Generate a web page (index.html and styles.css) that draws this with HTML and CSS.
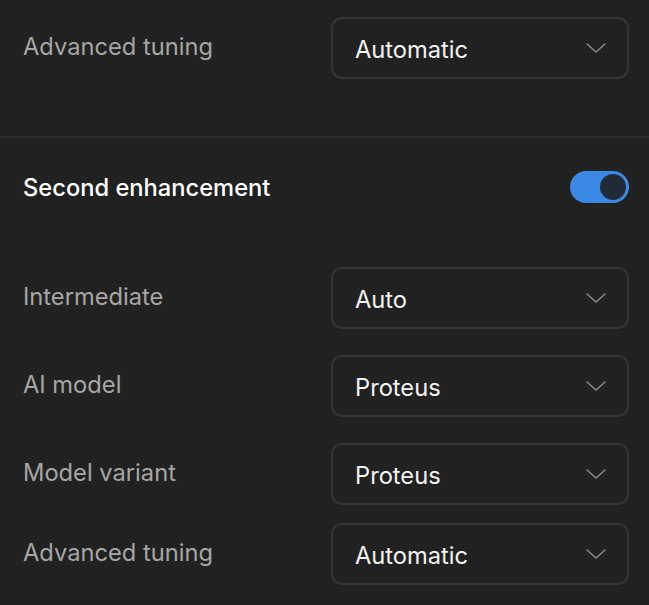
FILE: index.html
```html
<!DOCTYPE html>
<html>
<head>
<meta charset="utf-8">
<link rel="stylesheet" href="styles.css">
</head>
<body>
<div class="panel">
  <section class="group first">
    <div class="row">
      <span class="label">Advanced tuning</span>
      <div class="select"><span>Automatic</span><svg class="chev" viewBox="0 0 20 10" width="20" height="10"><path d="M1 1 L10 9 L19 1" fill="none" stroke="currentColor" stroke-width="1.5" stroke-linecap="round" stroke-linejoin="round"/></svg></div>
    </div>
  </section>
  <div class="divider"></div>
  <section class="group second">
    <div class="head">
      <span class="title">Second enhancement</span>
      <div class="toggle"><div class="knob"></div></div>
    </div>
    <div class="rows">
      <div class="row">
        <span class="label">Intermediate</span>
        <div class="select"><span>Auto</span><svg class="chev" viewBox="0 0 20 10" width="20" height="10"><path d="M1 1 L10 9 L19 1" fill="none" stroke="currentColor" stroke-width="1.5" stroke-linecap="round" stroke-linejoin="round"/></svg></div>
      </div>
      <div class="row">
        <span class="label">AI model</span>
        <div class="select"><span>Proteus</span><svg class="chev" viewBox="0 0 20 10" width="20" height="10"><path d="M1 1 L10 9 L19 1" fill="none" stroke="currentColor" stroke-width="1.5" stroke-linecap="round" stroke-linejoin="round"/></svg></div>
      </div>
      <div class="row">
        <span class="label">Model variant</span>
        <div class="select"><span>Proteus</span><svg class="chev" viewBox="0 0 20 10" width="20" height="10"><path d="M1 1 L10 9 L19 1" fill="none" stroke="currentColor" stroke-width="1.5" stroke-linecap="round" stroke-linejoin="round"/></svg></div>
      </div>
      <div class="row last">
        <span class="label">Advanced tuning</span>
        <div class="select"><span>Automatic</span><svg class="chev" viewBox="0 0 20 10" width="20" height="10"><path d="M1 1 L10 9 L19 1" fill="none" stroke="currentColor" stroke-width="1.5" stroke-linecap="round" stroke-linejoin="round"/></svg></div>
      </div>
    </div>
  </section>
</div>
</body>
</html>
```

FILE: styles.css
```css
html, body {
  margin: 0;
  padding: 0;
  background: #212121;
  font-family: Inter, "Noto Sans", sans-serif;
}
.panel {
  width: 649px;
  height: 605px;
  overflow: hidden;
}
.group {
  padding: 0 20px 0 23px;
}
.first {
  padding-top: 17px;
  padding-bottom: 57px;
}
.divider {
  height: 2px;
  background: #2c2c2c;
}
.second {
  padding-top: 33px;
}
.row {
  display: flex;
  align-items: center;
  justify-content: space-between;
  height: 62px;
}
.rows {
  margin-top: 64px;
  display: flex;
  flex-direction: column;
  gap: 26px;
}
.rows .row.last {
  margin-top: -8px;
}
.label {
  font-size: 23.7px;
  color: #a6a6a6;
  margin-bottom: 3px;
}
.select {
  box-sizing: border-box;
  width: 298px;
  height: 62px;
  border: 2px solid #363636;
  border-radius: 11px;
  display: flex;
  align-items: center;
  justify-content: space-between;
  padding: 0 21px 0 22px;
  color: #f2f2f2;
  font-size: 23.7px;
}
.select span {
  margin-top: 2px;
}
.chev {
  color: #8a8a8a;
  margin-bottom: 0;
}
.head {
  display: flex;
  align-items: center;
  justify-content: space-between;
  height: 32px;
}
.title {
  font-size: 23.7px;
  font-weight: 450;
  color: #ffffff;
}
.toggle {
  box-sizing: border-box;
  width: 59px;
  height: 32px;
  border-radius: 16px;
  background: #3c88e5;
  display: flex;
  align-items: center;
  justify-content: flex-end;
  padding-right: 3px;
}
.knob {
  width: 26px;
  height: 26px;
  border-radius: 50%;
  background: #202b38;
}
```
